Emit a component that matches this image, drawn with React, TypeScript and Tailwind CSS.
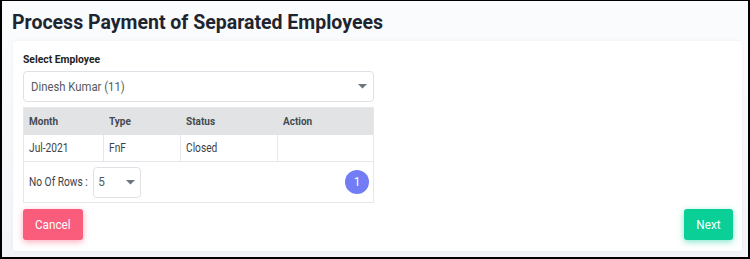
import React from "react";

function Caret() {
  return (
    <svg width="9" height="5" viewBox="0 0 9 5" className="shrink-0">
      <path d="M0 0 L9 0 L4.5 4.5 Z" fill="#6c757d" />
    </svg>
  );
}

function Cell({ children, last }: { children?: React.ReactNode; last?: boolean }) {
  return (
    <div className={last ? "pl-[5px] flex items-center" : "pl-[5px] flex items-center border-r border-[#e5e7ea]"}>
      <span className="inline-block origin-left scale-x-[0.85] whitespace-nowrap">{children}</span>
    </div>
  );
}

function Head({ children }: { children: React.ReactNode }) {
  return (
    <div className="pl-[5px]">
      <span className="inline-block origin-left scale-x-[0.87] whitespace-nowrap">{children}</span>
    </div>
  );
}

export default function App() {
  return (
    <div
      className="w-[750px] h-[259px] border-t border-l-2 border-r-2 border-b-2 border-black bg-gradient-to-b from-[#fbfcfd] to-[#f2f4f8] overflow-hidden"
      style={{ fontFamily: "Roboto, 'Noto Sans', sans-serif" }}
    >
      <h1 className="pl-[10px] pt-[10px] h-[40px] text-[19.5px] leading-[24px] font-bold text-[#1e2530]">
        Process Payment of Separated Employees
      </h1>
      <div className="ml-[11px] mr-[6px] h-[210px] bg-white rounded-[3px] shadow-[0_0_3px_rgba(154,161,171,0.15)] px-[10px] pt-[11px]">
        <div className="text-[11.5px] leading-[14px] font-bold text-[#222] mb-[5px]">
          <span className="inline-block origin-left scale-x-[0.9]">Select Employee</span>
        </div>
        <div className="w-[351px] h-[31px] border border-[#dee2e6] rounded-[4px] flex items-center justify-between pl-[7px] pr-[6px] text-[13px] text-[#555b61]">
          <span className="inline-block origin-left scale-x-[0.87] whitespace-nowrap">Dinesh Kumar (11)</span>
          <Caret />
        </div>
        <div className="w-[351px] mt-[5px] border border-[#e5e7ea] text-[12px] text-[#3c4249]">
          <div className="grid grid-cols-[80px_77px_97px_1fr] bg-[#e2e3e5] h-[27px] items-center font-bold text-[11.5px] text-[#444a51]">
            <Head>Month</Head>
            <Head>Type</Head>
            <Head>Status</Head>
            <Head>Action</Head>
          </div>
          <div className="grid grid-cols-[80px_77px_97px_1fr] h-[27px] border-b border-[#e5e7ea]">
            <Cell>Jul-2021</Cell>
            <Cell>FnF</Cell>
            <Cell>Closed</Cell>
            <Cell last />
          </div>
          <div className="h-[40px] flex items-center justify-between pl-[5px] pr-[4px]">
            <div className="flex items-center">
              <span className="w-[64px] inline-block">
                <span className="inline-block origin-left scale-x-[0.85] whitespace-nowrap">No Of Rows :</span>
              </span>
              <div className="w-[48px] h-[31px] border border-[#dee2e6] rounded-[4px] flex items-center justify-between pl-[4px] pr-[5px] text-[13px] text-[#555b61]">
                <span className="inline-block scale-x-[0.9]">5</span>
                <Caret />
              </div>
            </div>
            <div className="w-[24px] h-[24px] rounded-full bg-[#727cf5] text-white text-[12px] flex items-center justify-center">
              1
            </div>
          </div>
        </div>
        <div className="flex justify-between mt-[6px] w-[710px]">
          <button className="w-[60px] h-[31px] rounded-[3px] bg-[#fa5c7c] text-white text-[13px] shadow-[0_2px_6px_0_rgba(250,92,124,0.5)]">
            <span className="inline-block scale-x-[0.9]">Cancel</span>
          </button>
          <button className="w-[49px] h-[31px] rounded-[3px] bg-[#0acf97] text-white text-[13px] shadow-[0_2px_6px_0_rgba(10,207,151,0.5)]">
            <span className="inline-block scale-x-[0.9]">Next</span>
          </button>
        </div>
      </div>
    </div>
  );
}
